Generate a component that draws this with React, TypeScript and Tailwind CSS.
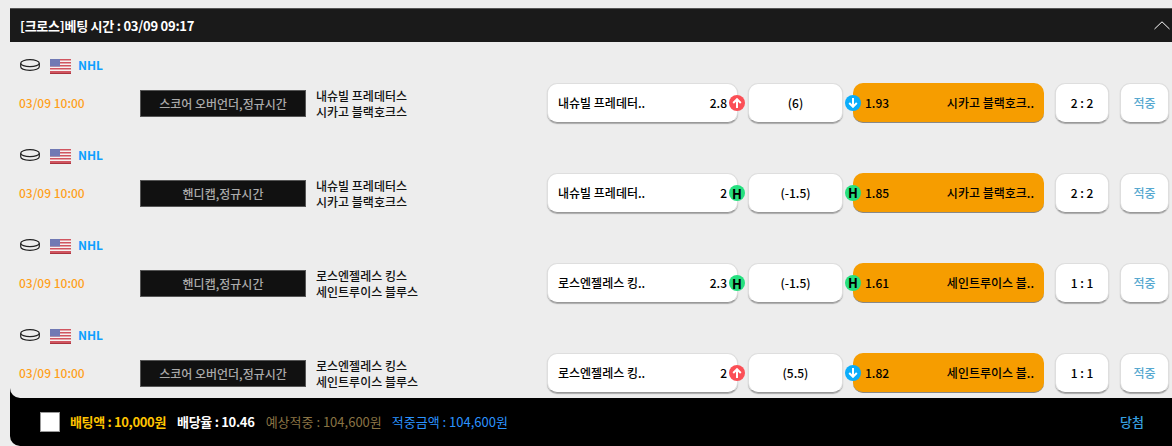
import React from "react";

const font = "font-['Noto_Sans_CJK_KR','Noto_Sans',sans-serif]";

type Badge = "up" | "down" | "h";

const bets = [
  {
    market: "스코어 오버언더,정규시간",
    home: "내슈빌 프레데터스",
    away: "시카고 블랙호크스",
    homeShort: "내슈빌 프레데터..",
    awayShort: "시카고 블랙호크..",
    homeOdds: "2.8",
    homeBadge: "up" as Badge,
    line: "(6)",
    awayBadge: "down" as Badge,
    awayOdds: "1.93",
    score: "2 : 2",
  },
  {
    market: "핸디캡,정규시간",
    home: "내슈빌 프레데터스",
    away: "시카고 블랙호크스",
    homeShort: "내슈빌 프레데터..",
    awayShort: "시카고 블랙호크..",
    homeOdds: "2",
    homeBadge: "h" as Badge,
    line: "(-1.5)",
    awayBadge: "h" as Badge,
    awayOdds: "1.85",
    score: "2 : 2",
  },
  {
    market: "핸디캡,정규시간",
    home: "로스엔젤레스 킹스",
    away: "세인트루이스 블루스",
    homeShort: "로스엔젤레스 킹..",
    awayShort: "세인트루이스 블..",
    homeOdds: "2.3",
    homeBadge: "h" as Badge,
    line: "(-1.5)",
    awayBadge: "h" as Badge,
    awayOdds: "1.61",
    score: "1 : 1",
  },
  {
    market: "스코어 오버언더,정규시간",
    home: "로스엔젤레스 킹스",
    away: "세인트루이스 블루스",
    homeShort: "로스엔젤레스 킹..",
    awayShort: "세인트루이스 블..",
    homeOdds: "2",
    homeBadge: "up" as Badge,
    line: "(5.5)",
    awayBadge: "down" as Badge,
    awayOdds: "1.82",
    score: "1 : 1",
  },
];

function Puck() {
  return (
    <svg width="20" height="12" viewBox="0 0 20 12" fill="none" stroke="#222" strokeWidth="1.2">
      <ellipse cx="10" cy="4.2" rx="9.3" ry="3.5" />
      <path d="M0.7 4.2v3.6c0 2 4 3.5 9.3 3.5s9.3-1.5 9.3-3.5V4.2" />
    </svg>
  );
}

function Flag() {
  return (
    <svg width="21" height="15" viewBox="0 0 21 15">
      <rect width="21" height="15" rx="1" fill="#f6f1f1" />
      <path d="M0 0h21v1.5H0zM0 3h21v1.5H0zM0 6h21v1.5H0zM0 9h21v1.5H0zM0 12h21v3H0z" fill="#d0545f" />
      <rect y="14" width="21" height="1" fill="#a8323c" />
      <rect width="10" height="7.5" fill="#7079b4" />
    </svg>
  );
}

function OddsBadge({ type }: { type: Badge }) {
  if (type === "h") {
    return (
      <span className="flex h-[16px] w-[16px] items-center justify-center rounded-full bg-[#26e07f] text-[13px] font-bold leading-none text-black">
        H
      </span>
    );
  }
  return (
    <span
      className={`flex h-[16px] w-[16px] items-center justify-center rounded-full ${
        type === "up" ? "bg-[#fb4f56]" : "bg-[#0badfa]"
      }`}
    >
      <svg width="10" height="10" viewBox="0 0 10 10" fill="none" stroke="white" strokeWidth="2">
        {type === "up" ? <path d="M5 10V1.5M1.2 5 5 1.2 8.8 5" /> : <path d="M5 0v8.5M1.2 5 5 8.8 8.8 5" />}
      </svg>
    </span>
  );
}

function BetRow({ bet }: { bet: (typeof bets)[number] }) {
  const whiteBtn =
    "flex h-[40px] items-center rounded-[10px] border border-[#dedede] border-b-[#999] bg-white text-black shadow-[0_1px_1px_#aaa]";
  return (
    <div className="h-[90px] pt-[14px]">
      <div className="flex h-[18px] items-center pl-[10px]">
        <Puck />
        <span className="ml-[10px] mt-[3px] flex">
          <Flag />
        </span>
        <span className="ml-[7px] text-[12px] font-bold text-[#0d9fff]">NHL</span>
      </div>
      <div className="mt-[9px] flex h-[40px] items-center pl-[9px] text-[12px] font-medium">
        <span className="w-[121px] text-[#ff9f1a]">03/09 10:00</span>
        <span className="mt-[1px] flex h-[27px] w-[166px] items-center justify-center border border-[#555] bg-[#111] text-[12px] text-[#aaa]">
          {bet.market}
        </span>
        <div className="ml-[10px] mt-[2px] w-[231px] text-[12px] leading-[16px] text-[#111]">
          <div>{bet.home}</div>
          <div>{bet.away}</div>
        </div>
        <div className={`${whiteBtn} relative w-[191px] pl-[10px] pr-[9px]`}>
          <span className="flex-1">{bet.homeShort}</span>
          <span className="mr-[1px]">{bet.homeOdds}</span>
          <span className="absolute left-[181px]">
            <OddsBadge type={bet.homeBadge} />
          </span>
        </div>
        <div className={`${whiteBtn} ml-[10px] w-[95px] justify-center`}>{bet.line}</div>
        <div className="relative ml-[10px] flex h-[40px] w-[191px] items-center rounded-[10px] border-b border-[#888] bg-[#f69d00] pl-[12px] pr-[10px] text-black">
          <span className="absolute left-[-8px]">
            <OddsBadge type={bet.awayBadge} />
          </span>
          <span className="flex-1">{bet.awayOdds}</span>
          <span>{bet.awayShort}</span>
        </div>
        <div className={`${whiteBtn} ml-[11px] w-[54px] justify-center`}>{bet.score}</div>
        <div className={`${whiteBtn} ml-[11px] w-[49px] justify-center !text-[#55a8d0]`}>적중</div>
      </div>
    </div>
  );
}

export default function App() {
  return (
    <div className={`h-[446px] w-[1172px] overflow-hidden bg-[#ededed] pl-[10px] pt-[8px] ${font}`}>
      <div className="flex h-[34px] items-center justify-between border-t border-[#555] bg-[#1a1a1a] pl-[10px] pr-[2px]">
        <span className="text-[13px] font-bold tracking-[-0.25px] text-white">[크로스]베팅 시간 : 03/09 09:17</span>
        <svg width="16" height="9" viewBox="0 0 16 9" fill="none" stroke="white" strokeWidth="1">
          <path d="M0.5 8 8 0.8 15.5 8" />
        </svg>
      </div>
      <div className="h-[356px] overflow-hidden bg-black">
        <div className="h-[356px] overflow-hidden rounded-bl-[10px] bg-[#ededed]">
          {bets.map((bet, i) => (
            <BetRow key={i} bet={bet} />
          ))}
        </div>
      </div>
      <div className="flex h-[48px] items-center rounded-bl-[10px] bg-black pl-[30px] pr-[28px] text-[13px]">
        <span className="h-[20px] w-[20px] border border-[#999] bg-white" />
        <span className="ml-[10px] font-bold tracking-[-0.35px] text-[#ffc400]">배팅액 : 10,000원</span>
        <span className="ml-[11px] font-bold tracking-[-0.3px] text-white">배당율 : 10.46</span>
        <span className="ml-[11px] text-[#8a7444]">예상적중 : 104,600원</span>
        <span className="ml-[10px] text-[#2b93ff]">적중금액 : 104,600원</span>
        <span className="ml-auto font-medium text-[#37a0e0]">당첨</span>
      </div>
    </div>
  );
}
